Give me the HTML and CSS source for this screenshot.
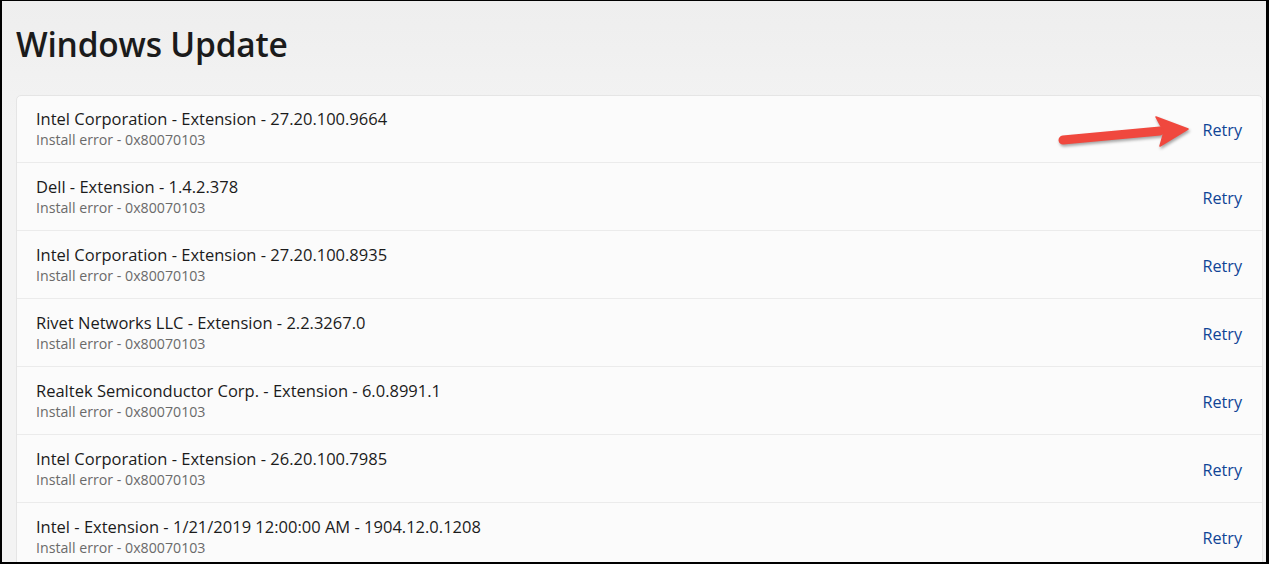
FILE: index.html
```html
<!DOCTYPE html>
<html lang="en">
<head>
<meta charset="utf-8">
<title>Windows Update</title>
<link rel="stylesheet" href="styles.css">
</head>
<body>
<div class="window">
  <h1 class="title">Windows Update</h1>
  <div class="card">
    <div class="row">
      <div class="info"><div class="name">Intel Corporation - Extension - 27.20.100.9664</div><div class="status">Install error - 0x80070103</div></div>
      <a class="retry">Retry</a>
    </div>
    <div class="row">
      <div class="info"><div class="name">Dell - Extension - 1.4.2.378</div><div class="status">Install error - 0x80070103</div></div>
      <a class="retry">Retry</a>
    </div>
    <div class="row">
      <div class="info"><div class="name">Intel Corporation - Extension - 27.20.100.8935</div><div class="status">Install error - 0x80070103</div></div>
      <a class="retry">Retry</a>
    </div>
    <div class="row">
      <div class="info"><div class="name">Rivet Networks LLC - Extension - 2.2.3267.0</div><div class="status">Install error - 0x80070103</div></div>
      <a class="retry">Retry</a>
    </div>
    <div class="row">
      <div class="info"><div class="name">Realtek Semiconductor Corp. - Extension - 6.0.8991.1</div><div class="status">Install error - 0x80070103</div></div>
      <a class="retry">Retry</a>
    </div>
    <div class="row">
      <div class="info"><div class="name">Intel Corporation - Extension - 26.20.100.7985</div><div class="status">Install error - 0x80070103</div></div>
      <a class="retry">Retry</a>
    </div>
    <div class="row">
      <div class="info"><div class="name">Intel - Extension - 1/21/2019 12:00:00 AM - 1904.12.0.1208</div><div class="status">Install error - 0x80070103</div></div>
      <a class="retry">Retry</a>
    </div>
  </div>
  <svg class="arrow" width="140" height="50" viewBox="1055 108 140 50" aria-hidden="true">
    <line x1="1063" y1="140" x2="1160" y2="131" stroke="#f0483e" stroke-width="9" stroke-linecap="round"/>
    <polygon points="1156,117 1188,129 1160,146 1164,132" fill="#f0483e" stroke="#f0483e" stroke-width="1.5" stroke-linejoin="round"/>
  </svg>
</div>
</body>
</html>
```
FILE: styles.css
```css
* { box-sizing: border-box; }
html, body { margin: 0; padding: 0; }
body { background: #000; font-family: "Open Sans", "Noto Sans", sans-serif; }
.window {
  position: relative;
  width: 1269px;
  height: 564px;
  overflow: hidden;
  border-style: solid;
  border-color: #000;
  border-width: 1px 3px 2px 2px;
  background: linear-gradient(#eeeeee, #f3f3f3 120px);
  padding: 21px 3px 0 14px;
}
.title {
  margin: 0 0 29px 0;
  font-size: 33.5px;
  line-height: 44px;
  font-weight: 600;
  color: #1b1b1b;
  letter-spacing: -0.2px;
}
.card {
  background: #fbfbfb;
  border: 1px solid #e5e5e5;
  border-radius: 5px;
}
.row {
  height: 68px;
  display: flex;
  align-items: center;
  justify-content: space-between;
  padding: 0 20px 0 19px;
  border-bottom: 1px solid #ebebeb;
}
.row:first-child { height: 67px; }
.name {
  font-size: 16.5px;
  line-height: 20px;
  color: #1b1b1b;
}
.status {
  margin-top: 2px;
  font-size: 14.2px;
  line-height: 18px;
  color: #6a6a6a;
}
.retry {
  font-size: 16.2px;
  line-height: 20px;
  color: #0f4496;
  margin-top: 2px;
}
.arrow {
  position: absolute;
  left: 1053px;
  top: 107px;
  filter: drop-shadow(1px 2px 1.5px rgba(0,0,0,0.35));
}
```
